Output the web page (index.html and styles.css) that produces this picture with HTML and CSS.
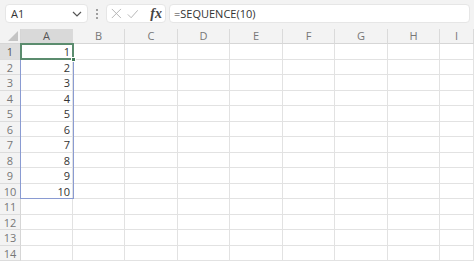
FILE: index.html
```html
<!DOCTYPE html>
<html>
<head>
<meta charset="utf-8">
<link rel="stylesheet" href="styles.css">
</head>
<body>
<div class="app">
  <div class="toolbar">
    <div class="namebox">
      <span class="nb-text">A1</span>
      <svg class="chev" width="10" height="6" viewBox="0 0 10 6"><path d="M1 1 L5 5 L9 1" fill="none" stroke="#555" stroke-width="1.2"/></svg>
    </div>
    <div class="grip"><i></i><i></i><i></i></div>
    <div class="fbtns">
      <svg width="13" height="13" viewBox="0 0 13 13"><path d="M1 1 L12 12 M12 1 L1 12" stroke="#b0b0b0" stroke-width="1.1" fill="none"/></svg>
      <svg width="14" height="12" viewBox="0 0 14 12"><path d="M1 6.5 L5 10.5 L13 1.5" stroke="#b0b0b0" stroke-width="1.1" fill="none"/></svg>
      <span class="fx">fx</span>
    </div>
    <div class="formula">=SEQUENCE(10)</div>
  </div>
  <div class="sheet">
    <div class="corner"><svg width="10" height="10" viewBox="0 0 10 10"><path d="M10 0 L10 10 L0 10 Z" fill="#c4c4c4"/></svg></div>
    <div class="ch sel">A</div><div class="ch">B</div><div class="ch">C</div><div class="ch">D</div><div class="ch">E</div><div class="ch">F</div><div class="ch">G</div><div class="ch">H</div><div class="ch">I</div>

    <div class="rh sel">1</div><div class="c num">1</div><div class="c"></div><div class="c"></div><div class="c"></div><div class="c"></div><div class="c"></div><div class="c"></div><div class="c"></div><div class="c"></div>
    <div class="rh">2</div><div class="c num">2</div><div class="c"></div><div class="c"></div><div class="c"></div><div class="c"></div><div class="c"></div><div class="c"></div><div class="c"></div><div class="c"></div>
    <div class="rh">3</div><div class="c num">3</div><div class="c"></div><div class="c"></div><div class="c"></div><div class="c"></div><div class="c"></div><div class="c"></div><div class="c"></div><div class="c"></div>
    <div class="rh">4</div><div class="c num">4</div><div class="c"></div><div class="c"></div><div class="c"></div><div class="c"></div><div class="c"></div><div class="c"></div><div class="c"></div><div class="c"></div>
    <div class="rh">5</div><div class="c num">5</div><div class="c"></div><div class="c"></div><div class="c"></div><div class="c"></div><div class="c"></div><div class="c"></div><div class="c"></div><div class="c"></div>
    <div class="rh">6</div><div class="c num">6</div><div class="c"></div><div class="c"></div><div class="c"></div><div class="c"></div><div class="c"></div><div class="c"></div><div class="c"></div><div class="c"></div>
    <div class="rh">7</div><div class="c num">7</div><div class="c"></div><div class="c"></div><div class="c"></div><div class="c"></div><div class="c"></div><div class="c"></div><div class="c"></div><div class="c"></div>
    <div class="rh">8</div><div class="c num">8</div><div class="c"></div><div class="c"></div><div class="c"></div><div class="c"></div><div class="c"></div><div class="c"></div><div class="c"></div><div class="c"></div>
    <div class="rh">9</div><div class="c num">9</div><div class="c"></div><div class="c"></div><div class="c"></div><div class="c"></div><div class="c"></div><div class="c"></div><div class="c"></div><div class="c"></div>
    <div class="rh">10</div><div class="c num">10</div><div class="c"></div><div class="c"></div><div class="c"></div><div class="c"></div><div class="c"></div><div class="c"></div><div class="c"></div><div class="c"></div>
    <div class="rh">11</div><div class="c"></div><div class="c"></div><div class="c"></div><div class="c"></div><div class="c"></div><div class="c"></div><div class="c"></div><div class="c"></div><div class="c"></div>
    <div class="rh">12</div><div class="c"></div><div class="c"></div><div class="c"></div><div class="c"></div><div class="c"></div><div class="c"></div><div class="c"></div><div class="c"></div><div class="c"></div>
    <div class="rh">13</div><div class="c"></div><div class="c"></div><div class="c"></div><div class="c"></div><div class="c"></div><div class="c"></div><div class="c"></div><div class="c"></div><div class="c"></div>
    <div class="rh">14</div><div class="c"></div><div class="c"></div><div class="c"></div><div class="c"></div><div class="c"></div><div class="c"></div><div class="c"></div><div class="c"></div><div class="c"></div>

    <div class="spill"></div>
    <div class="active"><span class="handle"></span></div>
  </div>
</div>
</body>
</html>
```

FILE: styles.css
```css
* { box-sizing: border-box; }
html, body { margin: 0; padding: 0; }
body {
  width: 474px;
  height: 263px;
  overflow: hidden;
  background: #ffffff;
  font-family: "Open Sans", "Noto Sans", sans-serif;
}
.app { display: flex; flex-direction: column; }

.toolbar {
  height: 29px;
  background: #f3f3f3;
  display: flex;
  align-items: flex-start;
  padding: 4px 4px 0 5px;
}
.namebox {
  width: 83px;
  height: 19px;
  background: #fff;
  border: 1px solid #e6e6e6;
  border-radius: 4px;
  display: flex;
  align-items: center;
  justify-content: space-between;
  padding: 0 5px 0 5px;
}
.nb-text { font-size: 11px; color: #333; }
.chev { margin-top: 1px; }
.grip {
  width: 18px;
  height: 19px;
  display: flex;
  flex-direction: column;
  align-items: center;
  justify-content: center;
  gap: 2px;
}
.grip i { width: 2px; height: 2px; background: #a0a0a0; display: block; }
.fbtns {
  width: 60px;
  height: 19px;
  background: #fff;
  border: 1px solid #e6e6e6;
  border-radius: 4px;
  display: flex;
  align-items: center;
  padding: 0 3px 0 4px;
  gap: 5px;
}
.fx {
  font-family: "Liberation Serif", serif;
  font-style: italic;
  font-weight: bold;
  font-size: 14px;
  color: #444;
  margin-left: 7px;
  line-height: 1;
}
.formula {
  flex: 1;
  margin-left: 3px;
  height: 19px;
  background: #fff;
  border: 1px solid #e6e6e6;
  border-radius: 4px;
  font-size: 11px;
  color: #333;
  line-height: 17px;
  padding-left: 4px;
}

.sheet {
  position: relative;
  display: grid;
  grid-template-columns: 21px 52px 52px 53px 52px 53px 52px 53px 52px 1fr;
  grid-template-rows: 15px repeat(7, 16px 15px);
}
.corner {
  background: #f3f3f3;
  border-right: 1px solid #d6d6d6;
  border-bottom: 1px solid #d6d6d6;
  display: flex;
  align-items: flex-end;
  justify-content: flex-end;
  padding: 0 2px 2px 0;
}
.ch {
  background: #f3f3f3;
  border-right: 1px solid #dadada;
  border-bottom: 1px solid #d6d6d6;
  font-size: 11px;
  color: #777;
  text-align: center;
  line-height: 14px;
}
.ch.sel { background: #d9d9d9; border-bottom: 1px solid #9e9e9e; color: #555; }
.rh {
  background: #f3f3f3;
  border-right: 1px solid #d6d6d6;
  border-bottom: 1px solid #dcdcdc;
  font-size: 11px;
  color: #777;
  text-align: center;
  display: flex;
  align-items: center;
  justify-content: center;
}
.rh.sel { background: #dedede; color: #555; border-right: 1px solid #9e9e9e; }
.c {
  border-right: 1px solid #e2e2e2;
  border-bottom: 1px solid #e2e2e2;
}
.num {
  font-family: "Open Sans", sans-serif;
  font-size: 11px;
  color: #333;
  text-align: right;
  padding-right: 2px;
  display: flex;
  align-items: center;
  justify-content: flex-end;
}
.spill {
  position: absolute;
  left: 20px;
  top: 14px;
  width: 54px;
  height: 156px;
  border: 1px solid #8a9bd2;
  pointer-events: none;
}
.active {
  position: absolute;
  left: 20px;
  top: 14px;
  width: 54px;
  height: 17px;
  border: 2px solid #5b8c6e;
}
.handle {
  position: absolute;
  right: -4px;
  bottom: -4px;
  width: 5px;
  height: 5px;
  background: #3f7a55;
  border: 1px solid #fff;
}
```
